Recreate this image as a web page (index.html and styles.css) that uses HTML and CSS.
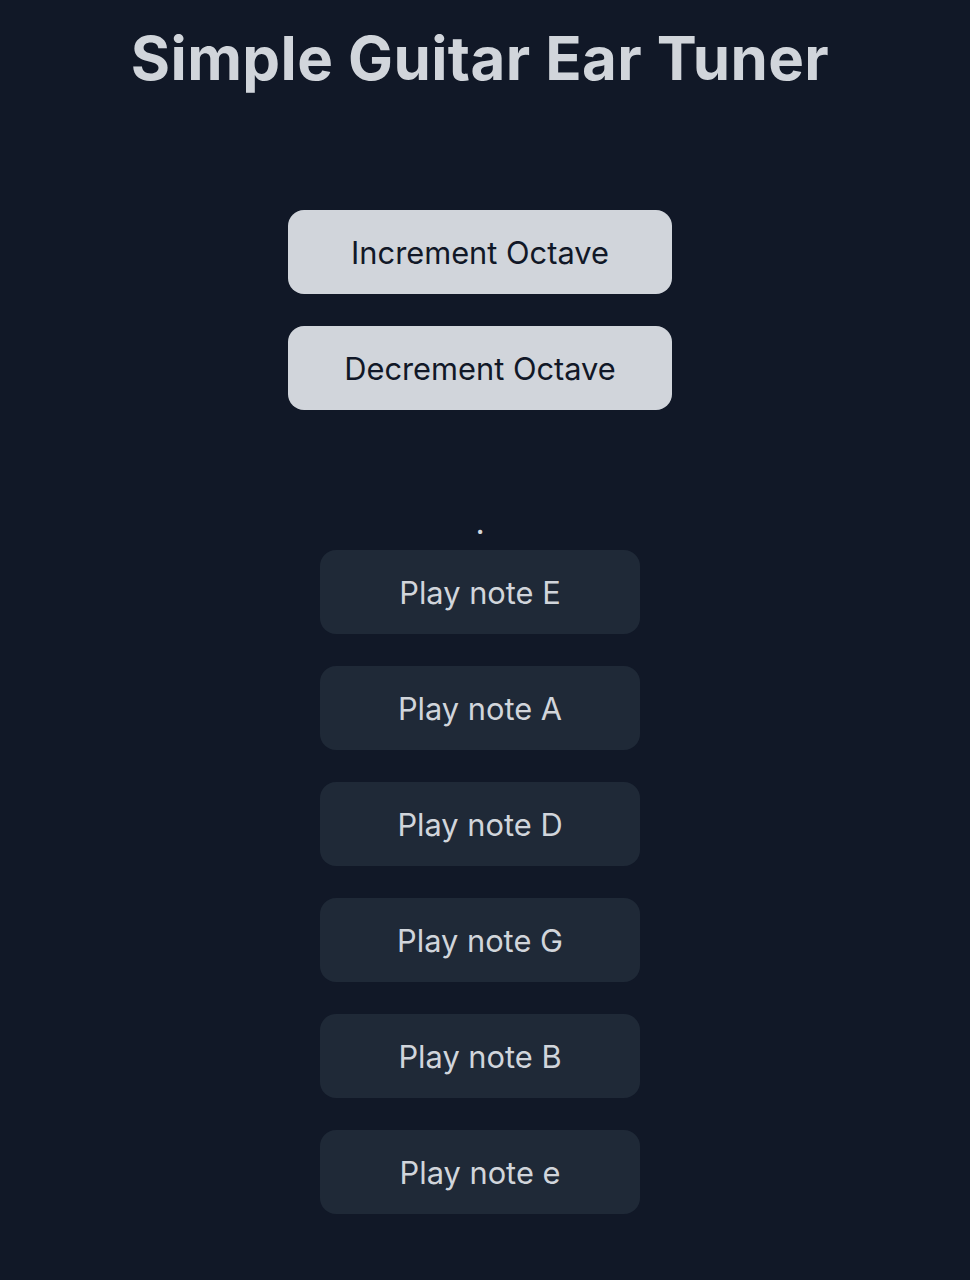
FILE: index.html
```html
<!DOCTYPE html>
<html lang="en">
<head>
<meta charset="utf-8">
<title>Simple Guitar Ear Tuner</title>
<link rel="stylesheet" href="styles.css">
</head>
<body>
<main class="page">
  <h1 class="title">Simple Guitar Ear Tuner</h1>
  <div class="octave">
    <button class="btn btn-light">Increment Octave</button>
    <button class="btn btn-light">Decrement Octave</button>
  </div>
  <div class="notes">
    <p class="status">.</p>
    <button class="btn btn-dark">Play note E</button>
    <button class="btn btn-dark">Play note A</button>
    <button class="btn btn-dark">Play note D</button>
    <button class="btn btn-dark">Play note G</button>
    <button class="btn btn-dark">Play note B</button>
    <button class="btn btn-dark">Play note e</button>
  </div>
</main>
</body>
</html>
```
FILE: styles.css
```css
html, body {
  margin: 0;
  padding: 0;
  background: #111827;
}
body {
  font-family: Inter, "Noto Sans", sans-serif;
  color: #d1d5db;
}
.page {
  width: 960px;
  display: flex;
  flex-direction: column;
  align-items: center;
  padding-top: 22px;
}
.title {
  margin: 0;
  font-size: 60px;
  line-height: 72px;
  font-weight: 700;
  color: #d1d5db;
  letter-spacing: 0.4px;
}
.octave {
  margin-top: 116px;
  display: flex;
  flex-direction: column;
  gap: 32px;
  align-items: center;
}
.notes {
  margin-top: 84px;
  display: flex;
  flex-direction: column;
  gap: 32px;
  align-items: center;
}
.status {
  margin: 0 0 -24px;
  padding-top: 5px;
  font-size: 32px;
  line-height: 48px;
  height: 43px;
  color: #d1d5db;
}
.btn {
  font-family: Inter, "Noto Sans", sans-serif;
  font-size: 30.8px;
  line-height: 48px;
  height: 84px;
  border: none;
  border-radius: 16px;
  padding: 2px 0 0;
  cursor: pointer;
}
.btn-light {
  width: 384px;
  background: #d1d5db;
  color: #111827;
}
.btn-dark {
  width: 320px;
  background: #1f2937;
  color: #d1d5db;
}
```
